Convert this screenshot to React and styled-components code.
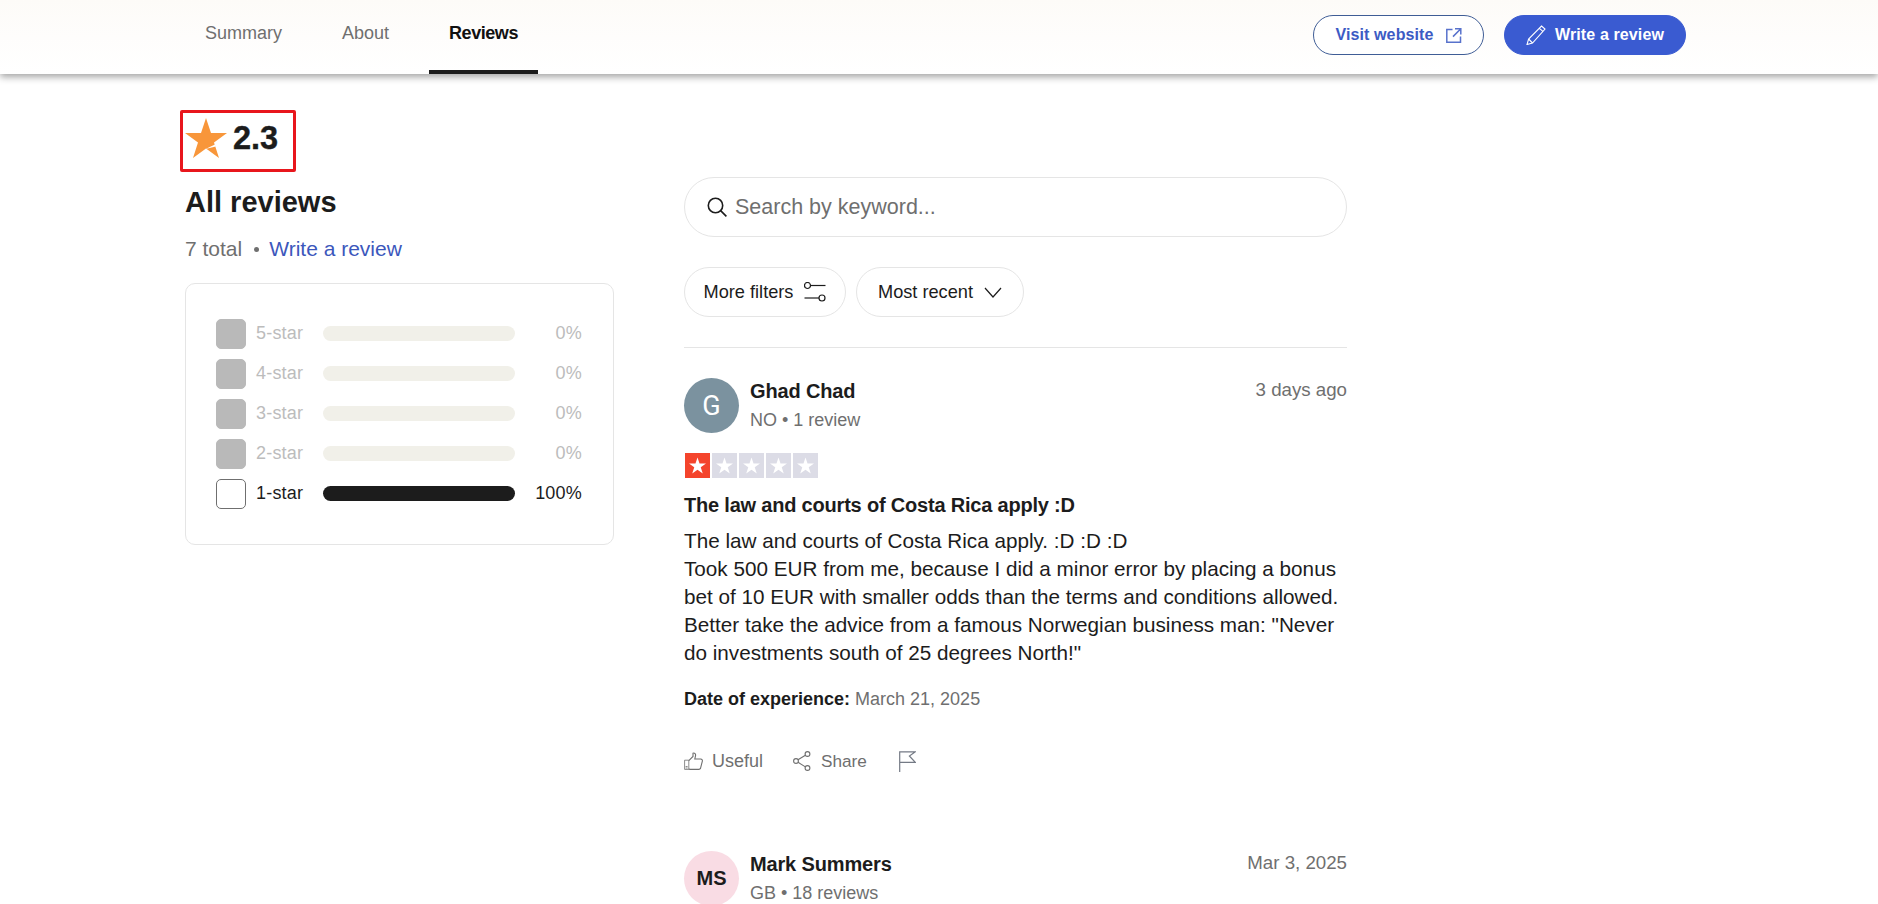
import React from "react";
import styled, { createGlobalStyle } from "styled-components";

const Global = createGlobalStyle`
  html, body { margin: 0; padding: 0; background: #fff; overflow: hidden; }
  body { font-family: "Liberation Sans", Arial, sans-serif; color: #1c1c1c; }
  #root { height: 904px; overflow: hidden; }
  * { box-sizing: border-box; }
`;

const Nav = styled.header`
  height: 74px;
  padding: 0 192px 0 185px;
  display: flex;
  align-items: stretch;
  justify-content: space-between;
  background: linear-gradient(180deg, #fdfbf8 0%, #fefdfc 50%, #fff 100%);
  box-shadow: 0 3px 7px rgba(0, 0, 0, 0.36);
  position: relative;
`;
const Tabs = styled.nav`
  display: flex;
  gap: 20px;
`;
const Tab = styled.a`
  padding: 0 20px 3px;
  display: flex;
  align-items: center;
  font-size: 18px;
  font-weight: ${(p) => (p.$active ? 700 : 400)};
  letter-spacing: ${(p) => (p.$active ? "-0.45px" : "0")};
  color: ${(p) => (p.$active ? "#111" : "#6f6f6f")};
  border-bottom: 4px solid ${(p) => (p.$active ? "#1c1c1c" : "transparent")};
`;
const NavActions = styled.div`
  display: flex;
  gap: 20px;
  padding-top: 15px;
`;
const NavButton = styled.a`
  height: 40px;
  width: ${(p) => p.$w}px;
  border-radius: 20px;
  display: flex;
  align-items: center;
  justify-content: center;
  gap: ${(p) => (p.$solid ? 9 : 12)}px;
  font-size: 16px;
  font-weight: 700;
  letter-spacing: 0.12px;
  color: ${(p) => (p.$solid ? "#fff" : "#3c5bc4")};
  background: ${(p) => (p.$solid ? "#3a5bd1" : "#fff")};
  border: 1px solid ${(p) => (p.$solid ? "#3a5bd1" : "#3f5d96")};
`;

const Main = styled.main`
  display: flex;
  gap: 70px;
  padding-left: 185px;
`;
const Side = styled.aside`
  width: 429px;
  padding-top: 36px;
`;
const RatingBox = styled.div`
  width: 116px;
  height: 62px;
  margin-left: -5px;
  padding: 0 0 6px 2px;
  border: 3px solid #e8161c;
  border-radius: 2px;
  display: flex;
  align-items: center;
  gap: 6px;
  font-size: 32.5px;
  font-weight: 700;
  color: #1c1c1c;
  -webkit-text-stroke: 0.4px #1c1c1c;
`;
const Heading = styled.h1`
  margin: 12px 0 0;
  font-size: 29px;
  line-height: 36px;
  font-weight: 700;
`;
const SubLine = styled.div`
  margin-top: 15px;
  font-size: 21px;
  line-height: 28px;
  color: #6f6f6f;
  display: flex;
  align-items: center;
  gap: 10px;
`;
const Dot = styled.span`
  width: 5px;
  height: 5px;
  border-radius: 50%;
  background: #6f6f6f;
  margin: 1px 0 0 2px;
`;
const Link = styled.a`
  color: #3c57bc;
`;
const Card = styled.section`
  margin-top: 20px;
  height: 262px;
  border: 1px solid #e5e5e5;
  border-radius: 10px;
  padding: 35px 31px 0 30px;
  display: flex;
  flex-direction: column;
  gap: 10px;
`;
const Row = styled.div`
  display: grid;
  grid-template-columns: 30px 57px 192px 57px;
  column-gap: 10px;
  height: 30px;
  align-items: center;
  font-size: 18px;
  letter-spacing: 0.2px;
  color: ${(p) => (p.$on ? "#1c1c1c" : "#bcbcbc")};
`;
const Check = styled.span`
  width: 30px;
  height: 30px;
  border-radius: 5px;
  background: ${(p) => (p.$on ? "#fff" : "#b9b9b9")};
  border: 1px solid ${(p) => (p.$on ? "#6f6f6f" : "#b9b9b9")};
`;
const RowText = styled.span`
  margin-top: -2px;
`;
const Bar = styled.span`
  height: 15px;
  margin-top: -1px;
  border-radius: 8px;
  background: ${(p) => (p.$on ? "#1c1c1c" : "#f1f0e9")};
`;
const Pct = styled(RowText)`
  text-align: right;
`;

const Content = styled.section`
  width: 663px;
  padding-top: 103px;
`;
const Search = styled.div`
  height: 60px;
  border: 1px solid #e5e5e5;
  border-radius: 30px;
  padding-left: 22px;
  display: flex;
  align-items: center;
  gap: 8px;
  font-size: 21.5px;
  color: #6f6f6f;
`;
const Chips = styled.div`
  margin-top: 30px;
  display: flex;
  gap: 10px;
`;
const Chip = styled.button`
  height: 50px;
  width: ${(p) => p.$w}px;
  border: 1px solid #e5e5e5;
  border-radius: 25px;
  background: #fff;
  padding: 0;
  display: flex;
  align-items: center;
  justify-content: center;
  gap: 11px;
  font: 400 18.2px "Liberation Sans", Arial, sans-serif;
  color: #1c1c1c;
`;
const Divider = styled.hr`
  margin: 30px 0;
  border: 0;
  border-top: 1px solid #e5e5e5;
`;
const ReviewHead = styled.div`
  display: flex;
  align-items: flex-start;
  gap: 10px;
`;
const Avatar = styled.div`
  width: 55px;
  height: 55px;
  flex: none;
  border-radius: 50%;
  background: ${(p) => p.$bg};
  color: ${(p) => p.$fg};
  font: ${(p) => p.$weight} ${(p) => p.$size}px ${(p) => p.$font}, sans-serif;
  display: flex;
  align-items: center;
  justify-content: center;
`;
const Who = styled.div`
  flex: 1;
`;
const Name = styled.div`
  font-size: 20px;
  line-height: 26px;
  font-weight: 700;
  letter-spacing: -0.15px;
  padding-left: 1px;
`;
const Meta = styled.div`
  margin-top: 3px;
  padding-left: 1px;
  font-size: 18px;
  line-height: 26px;
  color: #6f6f6f;
`;
const When = styled.div`
  margin-top: -1px;
  font-size: 18.7px;
  line-height: 26px;
  color: #6f6f6f;
`;
const StarRow = styled.div`
  margin: 20px 0 0 1px;
  display: flex;
  gap: 2px;
`;
const StarTile = styled.span`
  width: 25px;
  height: 25px;
  background: ${(p) => (p.$on ? "#f4442c" : "#dcdce6")};
  display: flex;
  align-items: center;
  justify-content: center;
`;
const Title = styled.h2`
  margin: 13px 0 0;
  font-size: 20px;
  line-height: 28px;
  font-weight: 700;
  letter-spacing: -0.2px;
`;
const Body = styled.p`
  margin: 8px 0 0;
  font-size: 20.7px;
  line-height: 28px;
  color: #1c1c1c;
`;
const Experience = styled.div`
  margin-top: 20px;
  font-size: 18px;
  line-height: 24px;
  color: #6f6f6f;
  b { color: #1c1c1c; }
`;
const Actions = styled.div`
  margin-top: 35px;
  display: flex;
  align-items: center;
  height: 30px;
  gap: 30px;
  font-size: 18px;
  color: #6f6f6f;
`;
const Action = styled.span`
  display: flex;
  align-items: center;
  gap: 9px;
`;
const ShareLabel = styled.span`
  font-size: 17.2px;
  margin-left: 1px;
`;
const FlagWrap = styled.span`
  display: flex;
  margin-left: 2px;
  color: #747a85;
`;
const NextReview = styled.article`
  margin-top: 75px;
`;

const STAR = "21,0 26,15 42,15 29,24.5 34,40 21,30.5 8,40 13,24.5 0,15 16,15";
const BigStar = () => (
  <svg width="42" height="40" viewBox="0 0 42 40">
    <polygon points={STAR} fill="#f8963a" />
    <polygon points="20.5,31 30,26.6 30.8,28.6" fill="#fff" />
  </svg>
);
const TinyStar = () => (
  <svg width="17" height="17" viewBox="0 0 42 40">
    <polygon points={STAR} fill="#fff" />
  </svg>
);
const Line = { fill: "none", stroke: "currentColor", strokeWidth: 1.1 };
const SearchIcon = () => (
  <svg width="20" height="20" viewBox="0 0 20 20" {...Line} strokeWidth="1.6" style={{ color: "#1c1c1c" }}>
    <circle cx="8.5" cy="8.5" r="7.2" />
    <path d="M13.6 13.6 19.4 19.4" />
  </svg>
);
const FilterIcon = () => (
  <svg width="22" height="20" viewBox="0 0 22 20" {...Line} strokeWidth="1.2">
    <circle cx="3.5" cy="3.5" r="3" />
    <path d="M6.5 3.5H21.5" />
    <circle cx="18" cy="16" r="3" />
    <path d="M0.5 16H15" />
  </svg>
);
const Chevron = () => (
  <svg width="18" height="11" viewBox="0 0 18 11" {...Line} strokeWidth="1.2">
    <path d="M1 1l8 9 8-9" />
  </svg>
);
const ExternalIcon = () => (
  <svg width="16" height="15" viewBox="0 0 16 15" {...Line} strokeWidth="1.5" style={{ color: "#5872cc" }}>
    <path d="M6.5 1.5H.8v12.7h13.7V8.5M9 .8h5.8v5.6M14.8.8 7 8.6" />
  </svg>
);
const PencilIcon = () => (
  <svg width="20" height="20" viewBox="0 0 20 20" {...Line} strokeWidth="1.1">
    <path d="M15.5 1 19 4 6.5 18 1 19.5 2.6 14zM13.4 3.4l3.5 3M2.6 14l3.9 4" />
  </svg>
);
const ThumbIcon = () => (
  <svg width="19" height="18" viewBox="0 0 19 18" {...Line}>
    <path d="M.6 8.2h4.2v9.2H.6zM1.6 14.5h2M1.6 16h2" strokeWidth="0.8" />
    <path d="M4.8 8.6 9 4.4V1.2c1.6-.6 3 .7 2.5 2.6L10.8 7h5.8c1.5 0 2 1.2 1.7 2.3l-1.8 7c-.3.8-.8 1.1-1.6 1.1H7c-.9 0-2.2-.5-2.2-.5" />
  </svg>
);
const ShareIcon = () => (
  <svg width="18" height="20" viewBox="0 0 18 20" {...Line}>
    <circle cx="3" cy="10" r="2.4" />
    <circle cx="14.5" cy="3" r="2.4" />
    <circle cx="14.5" cy="17" r="2.4" />
    <path d="M5 8.7 12.4 4.2M5 11.3l7.4 4.6" />
  </svg>
);
const FlagIcon = () => (
  <svg width="17" height="21" viewBox="0 0 17 21" {...Line} strokeWidth="1.2">
    <path d="M.7 21V.8h15.6L10.4 5l5.9 6.4H.7" />
  </svg>
);

const rows = [
  ["5-star", "0%"],
  ["4-star", "0%"],
  ["3-star", "0%"],
  ["2-star", "0%"],
  ["1-star", "100%", true],
];

export default function App() {
  return (
    <>
      <Global />
      <Nav>
        <Tabs>
          <Tab>Summary</Tab>
          <Tab>About</Tab>
          <Tab $active>Reviews</Tab>
        </Tabs>
        <NavActions>
          <NavButton $w={171}>
            Visit website <ExternalIcon />
          </NavButton>
          <NavButton $w={182} $solid>
            <PencilIcon /> Write a review
          </NavButton>
        </NavActions>
      </Nav>
      <Main>
        <Side>
          <RatingBox>
            <BigStar />
            2.3
          </RatingBox>
          <Heading>All reviews</Heading>
          <SubLine>
            <span>7 total</span>
            <Dot />
            <Link>Write a review</Link>
          </SubLine>
          <Card>
            {rows.map(([label, pct, on]) => (
              <Row key={label} $on={on}>
                <Check $on={on} />
                <RowText>{label}</RowText>
                <Bar $on={on} />
                <Pct>{pct}</Pct>
              </Row>
            ))}
          </Card>
        </Side>
        <Content>
          <Search>
            <SearchIcon />
            Search by keyword...
          </Search>
          <Chips>
            <Chip $w={162}>
              More filters <FilterIcon />
            </Chip>
            <Chip $w={168}>
              Most recent <Chevron />
            </Chip>
          </Chips>
          <Divider />
          <article>
            <ReviewHead>
              <Avatar $bg="#7b929f" $fg="#fff" $size={27} $weight={400} $font="Roboto">G</Avatar>
              <Who>
                <Name>Ghad Chad</Name>
                <Meta>NO • 1 review</Meta>
              </Who>
              <When>3 days ago</When>
            </ReviewHead>
            <StarRow>
              {[1, 2, 3, 4, 5].map((n) => (
                <StarTile key={n} $on={n === 1}>
                  <TinyStar />
                </StarTile>
              ))}
            </StarRow>
            <Title>The law and courts of Costa Rica apply :D</Title>
            <Body>
              The law and courts of Costa Rica apply. :D :D :D
              <br />
              Took 500 EUR from me, because I did a minor error by placing a bonus bet of 10 EUR with smaller odds than the terms and conditions allowed. Better take the advice from a famous Norwegian business man: "Never do investments south of 25 degrees North!"
            </Body>
            <Experience>
              <b>Date of experience:</b> March 21, 2025
            </Experience>
            <Actions>
              <Action><ThumbIcon /> Useful</Action>
              <Action><ShareIcon /> <ShareLabel>Share</ShareLabel></Action>
              <FlagWrap><FlagIcon /></FlagWrap>
            </Actions>
          </article>
          <NextReview>
            <ReviewHead>
              <Avatar $bg="#f9dce4" $fg="#1c1c1c" $size={20} $weight={700} $font="'Liberation Sans'">MS</Avatar>
              <Who>
                <Name>Mark Summers</Name>
                <Meta>GB • 18 reviews</Meta>
              </Who>
              <When>Mar 3, 2025</When>
            </ReviewHead>
          </NextReview>
        </Content>
      </Main>
    </>
  );
}
